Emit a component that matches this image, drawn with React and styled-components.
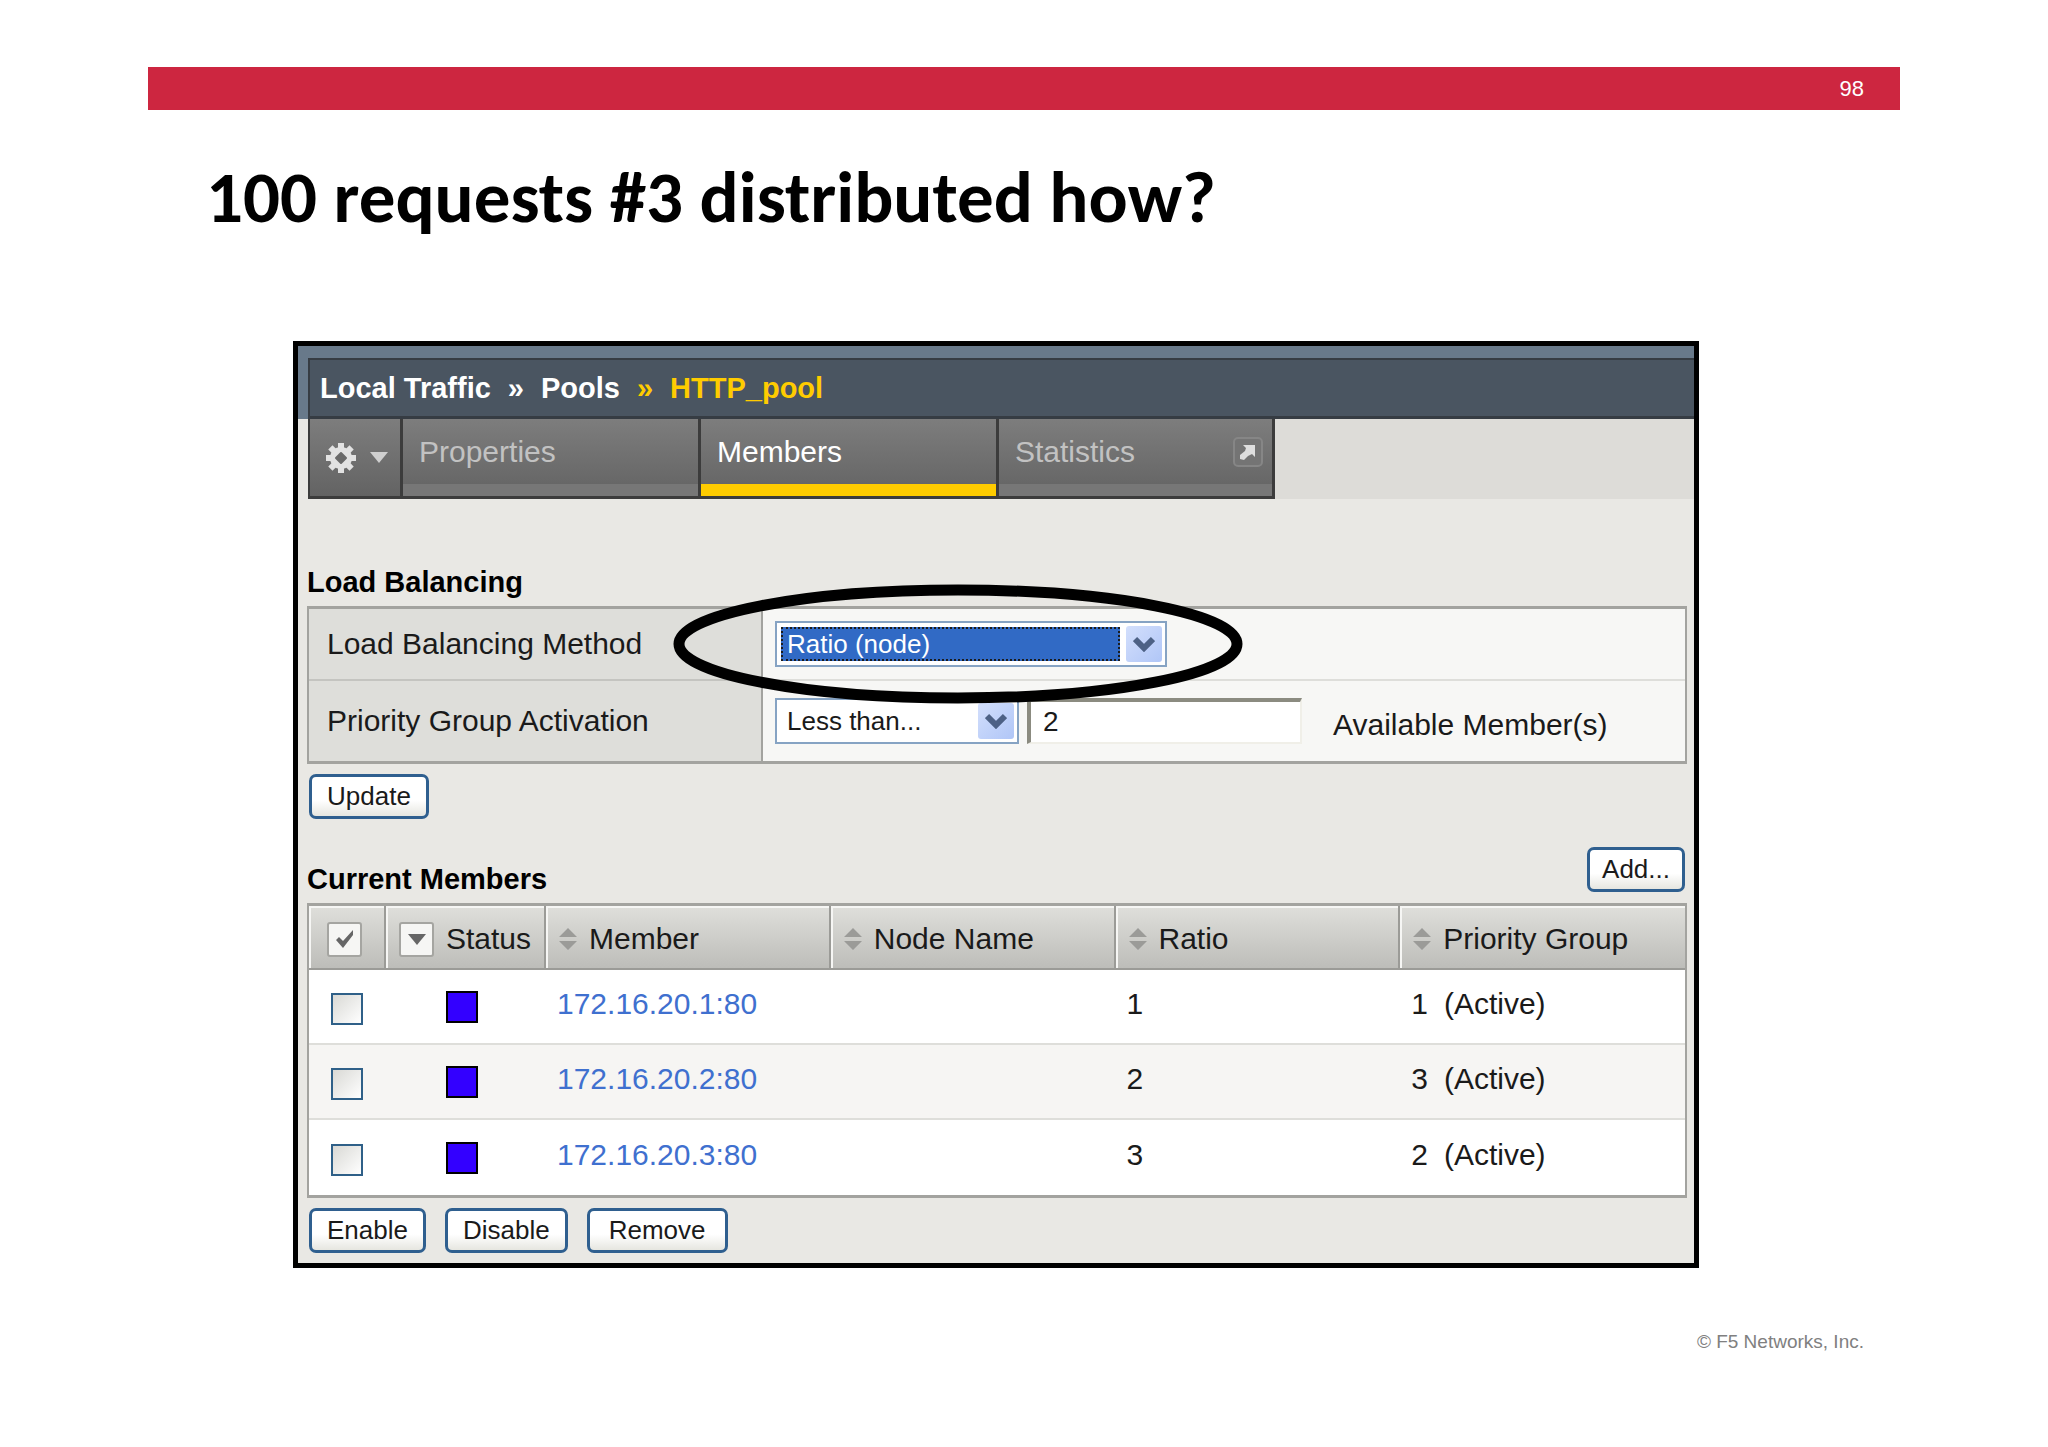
import { useState } from "react";
import styled, { createGlobalStyle } from "styled-components";

const members = [
  { address: "172.16.20.1:80", ratio: 1, group: 1 },
  { address: "172.16.20.2:80", ratio: 2, group: 3 },
  { address: "172.16.20.3:80", ratio: 3, group: 2 },
];

const sortableColumns = ["Member", "Node Name", "Ratio", "Priority Group"];

export default function App() {
  const [available, setAvailable] = useState("2");

  return (
    <Slide>
      <GlobalStyle />
      <TopBar>98</TopBar>
      <Title>100 requests #3 distributed how?</Title>

      <Panel>
        <Header>
          <Breadcrumb>
            <Crumb href="#traffic">Local Traffic</Crumb>
            <span>»</span>
            <Crumb href="#pools">Pools</Crumb>
            <Current>»</Current>
            <Current>HTTP_pool</Current>
          </Breadcrumb>
        </Header>
        <Tabs>
          <GearTab aria-label="Options">
            <GearIcon />
            <CaretIcon />
          </GearTab>
          <Tab>Properties</Tab>
          <Tab $active>Members</Tab>
          <Tab $last>
            Statistics
            <PopOutIcon />
          </Tab>
        </Tabs>

        <Content>
          <Heading>Load Balancing</Heading>
          <Settings>
            <SettingRow>
              <SettingLabel htmlFor="method">Load Balancing Method</SettingLabel>
              <SettingValue>
                <SelectBox $wide>
                  <Select id="method" $selected>
                    <option>Ratio (node)</option>
                  </Select>
                  <DropButton />
                </SelectBox>
              </SettingValue>
            </SettingRow>
            <SettingRow $tall>
              <SettingLabel htmlFor="activation">Priority Group Activation</SettingLabel>
              <SettingValue>
                <SelectBox>
                  <Select id="activation">
                    <option>Less than...</option>
                  </Select>
                  <DropButton />
                </SelectBox>
                <NumberBox
                  id="available"
                  type="text"
                  value={available}
                  onChange={e => setAvailable(e.target.value)}
                />
                <AvailableLabel htmlFor="available">Available Member(s)</AvailableLabel>
              </SettingValue>
            </SettingRow>
            <Callout viewBox="0 0 570 120">
              <ellipse cx="285" cy="60" rx="279" ry="54" fill="none" stroke="#000" strokeWidth="11" />
            </Callout>
          </Settings>
          <ButtonRow>
            <Button>Update</Button>
          </ButtonRow>

          <HeadingRow>
            <Heading>Current Members</Heading>
            <AddButton>Add...</AddButton>
          </HeadingRow>
          <MembersTable>
            <colgroup>
              <CheckCol />
              <StatusCol />
              <col />
              <col />
              <col />
              <col />
            </colgroup>
            <thead>
              <tr>
                <HeadCell>
                  <HeadContent $check>
                    <MiniButton aria-label="Select all">
                      <CheckIcon />
                    </MiniButton>
                  </HeadContent>
                </HeadCell>
                <HeadCell>
                  <HeadContent>
                    <MiniButton aria-label="Filter status">
                      <FilterIcon />
                    </MiniButton>
                    Status
                  </HeadContent>
                </HeadCell>
                {sortableColumns.map(name => (
                  <HeadCell key={name}>
                    <HeadContent>
                      <SortIcon />
                      {name}
                    </HeadContent>
                  </HeadCell>
                ))}
              </tr>
            </thead>
            <tbody>
              {members.map(({ address, ratio, group }) => (
                <MemberRow key={address}>
                  <Cell $check>
                    <Checkbox type="checkbox" aria-label={address} />
                  </Cell>
                  <Cell>
                    <StatusSquare />
                  </Cell>
                  <Cell>
                    <MemberLink href="#member">{address}</MemberLink>
                  </Cell>
                  <Cell />
                  <Cell>{ratio}</Cell>
                  <Cell>
                    <Group>
                      <span>{group}</span>
                      <span>(Active)</span>
                    </Group>
                  </Cell>
                </MemberRow>
              ))}
            </tbody>
          </MembersTable>
          <ButtonRow>
            <Button>Enable</Button>
            <Button>Disable</Button>
            <Button $wide>Remove</Button>
          </ButtonRow>
        </Content>
      </Panel>

      <Footer>© F5 Networks, Inc.</Footer>
    </Slide>
  );
}

function GearIcon() {
  return (
    <svg width="30" height="30" viewBox="0 0 30 30">
      <g fill="#e2e2e2">
        {[0, 45, 90, 135].map(angle => (
          <rect key={angle} x="12" y="0" width="6" height="30" transform={`rotate(${angle} 15 15)`} />
        ))}
        <circle cx="15" cy="15" r="11" />
      </g>
      <path d="M15 10L20 15L15 20L10 15Z" fill="#6a6a6a" stroke="#6a6a6a" strokeWidth="2" strokeLinejoin="round" />
    </svg>
  );
}

function CaretIcon() {
  return (
    <svg width="18" height="11" viewBox="0 0 18 11">
      <path d="M0 0H18L9 11Z" fill="#cfcfcf" />
    </svg>
  );
}

function PopOutIcon() {
  return (
    <svg width="30" height="30" viewBox="0 0 30 30">
      <rect x="1" y="1" width="28" height="28" rx="4" fill="#747474" stroke="#868686" strokeWidth="2" />
      <path d="M10 8H22V20L19 17L15 19L11 23L7 22V18L12 14L13 11Z" fill="#dedede" />
    </svg>
  );
}

function CheckIcon() {
  return (
    <svg width="20" height="20" viewBox="0 0 20 20">
      <path d="M1 11L4 8L8 12L18 1V6L8 19Z" fill="#666" />
    </svg>
  );
}

function FilterIcon() {
  return (
    <svg width="18" height="11" viewBox="0 0 18 11">
      <path d="M0 0H18L9 11Z" fill="#666" />
    </svg>
  );
}

function SortIcon() {
  return (
    <svg width="18" height="22" viewBox="0 0 18 22">
      <path d="M9 0L18 9H0Z M0 13H18L9 22Z" fill="#9b9b98" />
    </svg>
  );
}

function DropButton() {
  return (
    <DropChip>
      <svg width="22" height="16" viewBox="0 0 22 16">
        <path d="M2 3L11 12L20 3" fill="none" stroke="#4d6185" strokeWidth="6" />
      </svg>
    </DropChip>
  );
}

/* STYLES */
const GlobalStyle = createGlobalStyle`
  * {
    box-sizing: border-box;
  }

  body {
    margin: 0;

    background-color: white;

    font-family: "Liberation Sans", Arial, sans-serif;
  }

  svg {
    display: block;
    flex: none;
  }

  button,
  input,
  select {
    font-family: inherit;
  }
`;

const Slide = styled.main`
  padding: 67px 148px 0;
`;

const TopBar = styled.div`
  height: 43px;
  padding-right: 36px;

  background-color: #cd2640;

  display: flex;
  align-items: center;
  justify-content: flex-end;

  color: white;
  font-size: 22px;
`;

const Title = styled.h1`
  margin: 47px 58px 104px;

  color: black;
  font-family: Carlito, Lato, sans-serif;
  font-size: 73px;
  line-height: 80px;
`;

const Panel = styled.section`
  margin: 0 201px 0 145px;

  background-color: #e9e8e4;
  border: 5px solid black;

  color: #1a1a1a;
  font-size: 30px;
`;

const Header = styled.div`
  padding: 12px 0 0 10px;

  background-color: #68798a;
`;

const Breadcrumb = styled.nav`
  height: 61px;
  padding-left: 10px;

  background-color: #4a5561;
  border: solid #363c43;
  border-width: 2px 0 3px 2px;

  display: flex;
  align-items: center;
  gap: 17px;

  color: white;
  font-size: 29px;
  font-weight: bold;
`;

const Crumb = styled.a`
  color: inherit;
  text-decoration: none;
`;

const Current = styled.span`
  color: #fc0;
`;

const Tabs = styled.div`
  height: 80px;
  margin-left: 10px;

  background-color: #dddcd8;

  display: flex;
`;

const Tab = styled.button`
  width: ${({ $last }) => ($last ? "279px" : "298px")};
  padding: 0 9px 12px 16px;

  background: linear-gradient(#7d7d7d, #636363) padding-box;
  border: solid #3c3c3c;
  border-width: 0 ${({ $last }) => ($last ? "3px" : "0")} 3px 3px;
  box-shadow: inset 0 -12px ${({ $active }) => ($active ? "#fc0" : "#777")};

  display: flex;
  align-items: center;
  justify-content: space-between;

  color: ${({ $active }) => ($active ? "white" : "#c2c2c2")};
  font-size: 30px;
`;

const GearTab = styled.button`
  width: 92px;
  padding: 0 0 0 16px;

  background: linear-gradient(#7d7d7d, #636363);
  border: solid #3c3c3c;
  border-width: 0 0 3px 2px;

  display: flex;
  align-items: center;
  gap: 14px;
`;

const Content = styled.div`
  padding: 65px 7px 10px 9px;
`;

const Heading = styled.h2`
  margin: 0 0 6px;

  color: black;
  font-size: 29px;
  line-height: 36px;
`;

const HeadingRow = styled.div`
  margin-top: 28px;

  display: flex;
  align-items: flex-end;
  justify-content: space-between;
`;

const Settings = styled.div`
  position: relative;

  border: solid #a3a39f;
  border-width: 3px 2px;
`;

const SettingRow = styled.div`
  height: ${({ $tall }) => ($tall ? "80px" : "72px")};

  display: flex;

  &:last-of-type > * {
    border-bottom: none;
  }
`;

const SettingLabel = styled.label`
  width: 454px;
  padding-left: 18px;

  background-color: #dededa;
  border-right: 2px solid #a3a39f;
  border-bottom: 2px solid #c4c4c0;

  display: flex;
  align-items: center;
`;

const SettingValue = styled.div`
  padding-left: 12px;

  background-color: #f7f7f5;
  border-bottom: 2px solid #dededa;

  display: flex;
  flex: 1;
  align-items: center;
`;

const SelectBox = styled.div`
  width: ${({ $wide }) => ($wide ? "392px" : "244px")};
  height: 46px;
  padding: 3px 3px 3px 4px;

  background-color: white;
  border: 2px solid #86a3c3;

  display: flex;
  align-items: center;
  gap: 6px;
`;

const Select = styled.select`
  height: 34px;
  min-width: 0;
  padding: 0 4px;

  appearance: none;
  background-color: ${({ $selected }) => ($selected ? "#316ac5" : "white")};
  border: 2px dotted ${({ $selected }) => ($selected ? "#1c1c1c" : "white")};
  border-radius: 0;

  flex: 1;

  color: ${({ $selected }) => ($selected ? "white" : "#1a1a1a")};
  font-size: 26px;
  line-height: 30px;
`;

const DropChip = styled.span`
  width: 36px;
  height: 36px;

  background: linear-gradient(135deg, #d3dffc, #b0c6f7);
  border-radius: 3px;

  display: flex;
  align-items: center;
  justify-content: center;
`;

const NumberBox = styled.input`
  width: 275px;
  height: 46px;
  margin: 0 31px 0 8px;
  padding: 0 12px;

  background-color: white;
  border: solid;
  border-width: 4px 2px 2px 4px;
  border-color: #8b8b80 #f0efe8 #f0efe8 #8b8b80;

  color: #1a1a1a;
  font-size: 28px;
`;

const AvailableLabel = styled.label`
  padding-top: 8px;
`;

/* sits over the method row to mark the selected value */
const Callout = styled.svg`
  position: absolute;
  top: -25px;
  left: 364px;
  width: 570px;
  height: 120px;

  pointer-events: none;
`;

const ButtonRow = styled.div`
  margin: 10px 0 0 2px;

  display: flex;
  gap: 19px;
`;

const Button = styled.button`
  height: 45px;
  padding: 0 ${({ $wide }) => ($wide ? "19px" : "15px")};

  background: linear-gradient(white 60%, #e6e6e0);
  border: 3px solid #2f5f8f;
  border-radius: 7px;

  color: #1a1a1a;
  font-size: 26px;
`;

const AddButton = styled(Button)`
  margin: 0 2px 11px 0;
  padding: 0 12px;
`;

const MembersTable = styled.table`
  width: 100%;

  background-color: white;
  border: solid #a3a39f;
  border-width: 3px 2px;
  border-spacing: 0;

  table-layout: fixed;
`;

const CheckCol = styled.col`
  width: 77px;
`;

const StatusCol = styled.col`
  width: 160px;
`;

const HeadCell = styled.th`
  height: 64px;
  padding: 0;

  background: linear-gradient(#dfdfdb, #bdbdb9);
  border-right: 2px solid #9b9b97;
  border-bottom: 2px solid #9b9b97;
  box-shadow: inset 2px 2px #f6f6f4;

  font-weight: normal;

  &:last-child {
    border-right: none;
  }
`;

const HeadContent = styled.div`
  padding: 4px 0 0 ${({ $check }) => ($check ? "18px" : "13px")};

  display: flex;
  align-items: center;
  gap: 12px;
`;

const MiniButton = styled.button`
  width: 35px;
  height: 35px;
  padding: 0;

  background-color: #f6f6f4;
  border: 2px solid #a5a5a1;
  border-radius: 3px;

  display: flex;
  flex: none;
  align-items: center;
  justify-content: center;
`;

const MemberRow = styled.tr`
  height: 75px;

  &:nth-child(even) {
    background-color: #f6f5f3;
  }

  &:last-child > td {
    border-bottom: none;
  }
`;

const Cell = styled.td`
  padding: ${({ $check }) => ($check ? "4px 22px 0" : "0 11px 6px")};

  border-bottom: 2px solid #dededa;

  &:nth-child(2) {
    padding: 0 60px;
  }
`;

const Checkbox = styled.input`
  width: 32px;
  height: 32px;
  margin: 0;

  appearance: none;
  background: linear-gradient(135deg, #d9d9d5, white);
  border: 2px solid #2f6088;

  display: block;
`;

const StatusSquare = styled.div`
  width: 32px;
  height: 32px;

  background-color: #30f;
  border: 2px solid black;
`;

const MemberLink = styled.a`
  color: #3f70cf;
  text-decoration: none;
`;

const Group = styled.div`
  display: flex;
  gap: 16px;
`;

const Footer = styled.footer`
  margin-top: 62px;
  padding-right: 36px;

  color: #808080;
  font-size: 19px;
  line-height: 24px;
  text-align: right;
`;
